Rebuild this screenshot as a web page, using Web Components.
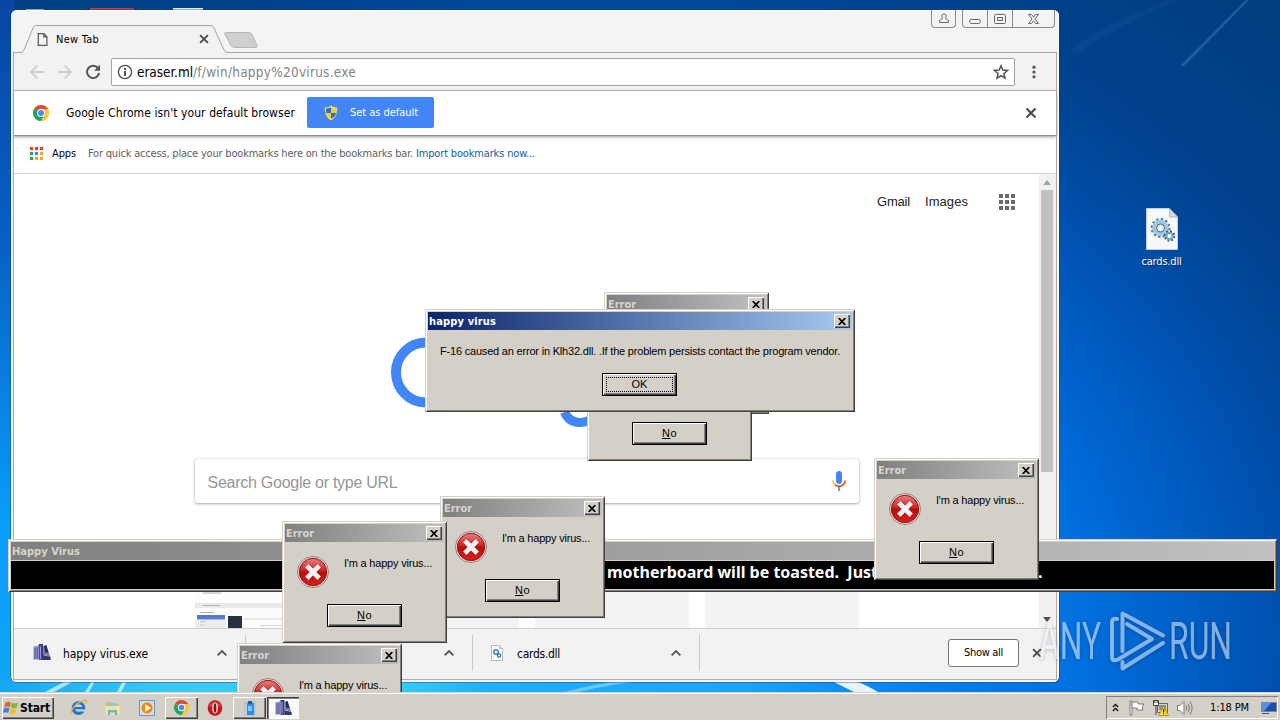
<!DOCTYPE html>
<html lang="en">
<head>
<meta charset="utf-8">
<title>Desktop</title>
<style>
  html, body {
    margin: 0;
    width: 1280px;
    height: 720px;
    overflow: hidden;
    font: 11px/14px "DejaVu Sans Condensed", "DejaVu Sans", sans-serif;
    color: #000;
  }
</style>
</head>
<body>
<desk-top></desk-top>

<script>
const define = (name, ctor) => window.customElements.define(name, ctor);

// One line of text, spaced out or in to take exactly `fit` pixels.
class UiLabel extends HTMLElement {
  constructor() {
    super();

    this.attachShadow({ mode: 'open' }).innerHTML = `
      <style>
        :host {
          display: block;
          flex: none;
          white-space: nowrap;
        }
      </style>
      <span><slot></slot></span>
    `;
  }

  connectedCallback() {
    const fit = Number(this.getAttribute('fit'));
    if (!fit) return;

    const span = this.shadowRoot.querySelector('span');
    const natural = span.getBoundingClientRect().width;
    const count = this.textContent.length;

    span.style.letterSpacing = `${(fit - natural) / count}px`;
    this.style.width = `${fit}px`;
  }
}

const ICONS = {
  chrome: `<svg viewBox="0 0 16 16">
    <circle cx="8" cy="8" r="8" fill="#fbc116"/>
    <path d="M8 8 1.1 4A8 8 0 0 1 14.9 4Z" fill="#dd4b3e"/>
    <path d="M1.1 4A8 8 0 0 0 8 16L11.4 10 8 8Z" fill="#1da462"/>
    <path d="M8 4.2h7A8 8 0 0 1 8 16l3.4-6Z" fill="#fcc934"/>
    <circle cx="8" cy="8" r="3.9" fill="#fff"/><circle cx="8" cy="8" r="3" fill="#4a8af4"/></svg>`,
  page: `<svg viewBox="0 0 16 16" fill="none" stroke="#5a5a5a" stroke-width="1.3"><path d="M3.5 1.7h6l3.2 3.4v9.2H3.5zM9.3 1.7v3.6h3.4"/></svg>`,
  close: `<svg viewBox="0 0 16 16" stroke="#4a4a4a" stroke-width="2.1"><path d="m3.5 3.5 9 9m0-9-9 9"/></svg>`,
  back: `<svg viewBox="0 0 16 16" fill="none" stroke="#cdcdcd" stroke-width="1.8"><path d="M15 8H2m6.3-6.3L2 8l6.3 6.3"/></svg>`,
  forward: `<svg viewBox="0 0 16 16" fill="none" stroke="#cdcdcd" stroke-width="1.8"><path d="M1 8h13M7.7 1.7 14 8l-6.3 6.3"/></svg>`,
  reload: `<svg viewBox="0 0 16 16" fill="none" stroke="#555" stroke-width="2"><path d="M13 4.2A6.1 6.1 0 1 0 14.1 9"/><path d="M15 .8v6H9z" fill="#555" stroke="none"/></svg>`,
  info: `<svg viewBox="0 0 16 16"><circle cx="8" cy="8" r="6.6" fill="none" stroke="#505050" stroke-width="1.4"/><path d="M7 7h2v5H7zM7 4h2v2H7z" fill="#505050"/></svg>`,
  star: `<svg viewBox="0 0 16 16" fill="none" stroke="#555" stroke-width="1.5"><path d="m8 1.8 1.8 4.3 4.7.4-3.6 3 1.1 4.7L8 11.7l-4 2.5 1.1-4.7-3.6-3 4.7-.4z"/></svg>`,
  dots: `<svg viewBox="0 0 16 16" fill="#555"><circle cx="8" cy="3.2" r="1.6"/><circle cx="8" cy="8" r="1.6"/><circle cx="8" cy="12.8" r="1.6"/></svg>`,
  apps: `<svg viewBox="0 0 14 14"><path d="M0 0h3.4v3.4H0zM5.3 0h3.4v3.4H5.3zM10.6 0H14v3.4h-3.4z" fill="#d8483a"/><path d="M0 5.3h3.4v3.4H0z" fill="#2a9d5c"/><path d="M5.3 5.3h3.4v3.4H5.3z" fill="#4285f4"/><path d="M10.6 5.3H14v3.4h-3.4z" fill="#f5a623"/><path d="M0 10.6h3.4V14H0z" fill="#2a9d5c"/><path d="M5.3 10.6h3.4V14H5.3zM10.6 10.6H14V14h-3.4z" fill="#f0a81e"/></svg>`,
  grid: `<svg viewBox="0 0 16 16" fill="#6b6b6b"><path d="M0 0h4v4H0zM6 0h4v4H6zM12 0h4v4h-4zM0 6h4v4H0zM6 6h4v4H6zM12 6h4v4h-4zM0 12h4v4H0zM6 12h4v4H6zM12 12h4v4h-4z"/></svg>`,
  shield: `<svg viewBox="0 0 14 16"><path d="M7 .5C5 2 3 2.200.8 2.200.5 8 2 13 7 15.500 12 13 13.500 8 13.200 2.200 11 2.200 9 2 7 .5Z" fill="#fff6c0" stroke="#8a8a6a" stroke-width=".8"/><path d="M7 2C5.500 3 4 3.400 2 3.400V8h5z" fill="#2f6fc8"/><path d="M7 2c1.500 1 3 1.400 5 1.400V8H7z" fill="#f7cf1d"/><path d="M2 8h5v6C4 12.500 2.500 10.500 2 8Z" fill="#f7cf1d"/><path d="M12 8H7v6c3-1.500 4.500-3.500 5-6Z" fill="#2f6fc8"/></svg>`,
  mic: `<svg viewBox="0 0 14 20"><rect x="4" width="6" height="13" rx="3" fill="#4285f4"/><path d="M.9 9.500A6.100 6.100 0 0 0 3 13.800" fill="none" stroke="#fbbc05" stroke-width="1.600"/><path d="M3 13.800a6.100 6.100 0 0 0 10.100-4.300" fill="none" stroke="#ea4335" stroke-width="1.600"/><path d="M6.200 16h1.600v4H6.200z" fill="#34a853"/></svg>`,
  chevron: `<svg viewBox="0 0 16 16" fill="none" stroke="#555" stroke-width="2.100"><path d="m3 10.700 5-5 5 5"/></svg>`,
  dll: `<svg viewBox="0 0 32 42"><path d="M.5.500h23l8 8.500v32.500H.5z" fill="#f7f8fa" stroke="#c9cdd2"/><path d="M23.500.500v8.500h8z" fill="#d5dbe3" stroke="#9aa5b0" stroke-width=".7"/>
    <circle cx="14.500" cy="20" r="8.500" fill="none" stroke="#55748e" stroke-width="2.800" stroke-dasharray="2.300 2.150"/>
    <circle cx="14.500" cy="20" r="6.300" fill="none" stroke="#9cc8e4" stroke-width="4"/><circle cx="14.500" cy="20" r="4" fill="#e8f2f8" stroke="#46647c"/>
    <circle cx="23.500" cy="28" r="4.600" fill="none" stroke="#3e5568" stroke-width="2.200" stroke-dasharray="1.800 1.810"/><circle cx="23.500" cy="28" r="3.200" fill="#fff" stroke="#6ea4d0" stroke-width="2.300"/></svg>`,
  dllSmall: `<svg viewBox="0 0 12 16"><path d="M.5.5h8l3 3v12H.5z" fill="#fafbfc" stroke="#b4bac2"/><path d="M8.500.5v3h3" fill="#dde3ea" stroke="#b4bac2"/><circle cx="5" cy="7" r="2.200" fill="#fff" stroke="#4f8cc4" stroke-width="1.800"/><circle cx="8" cy="10.500" r="1.600" fill="#fff" stroke="#3d6ea4" stroke-width="1.300"/></svg>`,
  exe: `<svg viewBox="0 0 16 16"><path d="M0 2h3l2-1v14H0z" fill="#8d90c8"/><path d="M1 4h1v10H1zM3 3h1v11H3z" fill="#5a5d9c"/><path d="M5 0h4v15H5z" fill="#3c3f80"/><path d="M6 2h1v12H6z" fill="#9fa3dc"/><path d="m9 2 3-1 4 12v2H9z" fill="#7377b8"/><path d="m10 2 2-1 2 7h-3z" fill="#27295a"/><path d="M9 10h4v2h3v3H9z" fill="#34376e"/><path d="M10 10h3v1h-3zM1 15h4v-1H1z" fill="#c4c7ee"/></svg>`,
  error: `<svg viewBox="0 0 32 32"><defs><linearGradient id="r" x1="0" y1="0" x2="0" y2="1"><stop offset="0" stop-color="#e88080"/><stop offset=".45" stop-color="#cc2424"/><stop offset=".5" stop-color="#b80d0d"/><stop offset="1" stop-color="#d62222"/></linearGradient></defs>
    <circle cx="16" cy="16" r="15.500" fill="#f2e5e3" stroke="#8e8080"/><circle cx="16" cy="16" r="13.700" fill="url(#r)" stroke="#9c1010"/>
    <path d="m10 10 12 12m0-12L10 22" stroke="#8e1010" stroke-width="6.200" opacity=".4"/><path d="m9.800 9.800 12.400 12.400m0-12.400L9.800 22.200" stroke="#f1f1f1" stroke-width="4.800"/></svg>`,
  flag: `<svg viewBox="0 0 16 16"><path d="M3 2v13H1V1h2z" fill="#fff" stroke="#666" stroke-width=".8"/><path d="M3 2h6v2h6l-2 3 1 3H8V8H3z" fill="#fff" stroke="#707070" stroke-width=".9"/></svg>`,
  network: `<svg viewBox="0 0 16 16"><path d="M4.500 3.500h10v9h-10z" fill="#d8d5bd" stroke="#666"/><path d="M6 5h7v5H6z" fill="#8f8e82"/><path d="M.5.500h5v5h-5zM3 5v10" fill="#f5f5e8" stroke="#444"/><path d="M1.800 0v3m2.400-3v3" stroke="#444"/><path d="m10.500 6.500 5 9h-10z" fill="#ffdf26" stroke="#9c8200" stroke-width=".7"/><path d="M10 9h1.200v3.500H10zm0 4.200h1.200v1H10z" fill="#222"/></svg>`,
  sound: `<svg viewBox="0 0 16 16" fill="none" stroke="#777"><path d="M.5 5.500H3L7 1.500v13l-4-4H.5z" fill="#fff"/><path d="M9 5.500q1.600 2.500 0 5m2-7q3 4.500 0 9m2-11q4.200 6.500 0 13"/></svg>`,
  up: `<svg viewBox="0 0 8 10" fill="none" stroke="#111" stroke-width="1.500"><path d="m1 4.500 3-3 3 3m-6 4.500 3-3 3 3"/></svg>`,
  monitor: `<svg viewBox="0 0 16 14"><path d="M.5 1.500h15v9H.5z" fill="#1d50a8" stroke="#6f86a8"/><path d="M1 2h9L3 10H1z" fill="#5c93e0"/><path d="M1 12.500h7" stroke="#555"/></svg>`,
  windows: `<svg viewBox="0 0 16 16"><path d="M2.500 2.500Q5 .8 8 2.500L6.700 7.300Q4 5.800 1.200 7.200Z" fill="#e8622a"/><path d="M9 2.800q2.800 1.600 6-.2L13.600 7.500q-3 1.500-5.800 0Z" fill="#7cb83a"/><path d="M1 8.300q2.700-1.500 5.500 0L5.200 13Q2.500 11.500-.2 13Z" fill="#3d83d8"/><path d="M7.500 8.600q2.800 1.500 5.800 0L12 13.400q-3 1.600-5.800 0Z" fill="#f5bd28"/></svg>`,
  ie: `<svg viewBox="0 0 16 16"><circle cx="8" cy="8.500" r="5" fill="none" stroke="#2277cf" stroke-width="3"/><path d="M4 7.500h9v2.200H4z" fill="#2277cf"/><path d="M10 9.800h5v2h-5z" fill="#d4d0c8"/><path d="M1.500 14.500C-1 12 6 2 15 1.200c1.300.8-.3 2.800-.8 3.200" fill="none" stroke="#e8b73a" stroke-width="1.300"/></svg>`,
  explorer: `<svg viewBox="0 0 16 16"><path d="M1 2h6l1 2h6v10H1z" fill="#e5c24e"/><path d="M3 3h9v5H3z" fill="#8cc8e0"/><path d="M.5 6h14v8.500H.5z" fill="#f6e49a"/><path d="M3 15v-4q0-1 1-1h7q1 0 1 1v4h-2v-2.500H5V15z" fill="#6bb1dd"/></svg>`,
  media: `<svg viewBox="0 0 16 16"><path d="M.5.500h15v15H.5z" fill="#c5ddf2" stroke="#5d98d0"/><circle cx="8" cy="8" r="6.200" fill="#f08a18" stroke="#fff" stroke-width=".8"/><path d="m6 4.200 6 3.800-6 3.800z" fill="#fff"/></svg>`,
  opera: `<svg viewBox="0 0 16 16"><ellipse cx="8" cy="8" rx="7.300" ry="7.700" fill="#c4161b"/><path d="M2 5q6-7 12 0v2q-6-3-12 0z" fill="#dd6a66" opacity=".6"/><ellipse cx="8" cy="8" rx="2.900" ry="5.500" fill="#f0e4e0"/><ellipse cx="8" cy="8" rx="1.400" ry="4.700" fill="#8a1013"/></svg>`,
  bin: `<svg viewBox="0 0 16 16"><path d="M3 2h10v13H3z" fill="#b8ddf4" stroke="#98a8b8" stroke-width=".6"/><path d="M5 3h7v12H5z" fill="#2b8ae2"/><path d="M6 1h4v3H6z" fill="#2a5896"/><path d="M6 6h4v5H6z" fill="#79c8ff"/></svg>`
};

class UiIcon extends HTMLElement {
  constructor() {
    super();
    this.attachShadow({ mode: 'open' });
  }

  connectedCallback() {
    const size = this.getAttribute('size') || 16;
    const height = this.getAttribute('height') || size;

    this.shadowRoot.innerHTML = `
      <style>
        :host {
          display: block;
          flex: none;
          width: ${size}px;
          height: ${height}px;
        }

        svg {
          display: block;
          width: 100%;
          height: 100%;
        }
      </style>
      ${ICONS[this.getAttribute('name')]}
    `;
  }
}

// Classic raised push button
class ClassicButton extends HTMLElement {
  constructor() {
    super();

    this.attachShadow({ mode: 'open' }).innerHTML = `
      <style>
        :host {
          display: flex;
          flex: none;
          align-items: center;
          justify-content: center;
          box-sizing: border-box;
          width: 75px;
          height: 23px;
          border: 1px solid #000;
          box-shadow: inset 1px 1px #fff, inset -1px -1px #404040, inset -2px -2px #808080;
          background: #d4d0c8;
          font: 11px/13px "Liberation Sans", Arial, sans-serif;
        }

        #face {
          display: flex;
          align-items: center;
          justify-content: center;
          width: 65px;
          height: 13px;
          border: 1px solid transparent;
        }

        :host([focused]) #face {
          border: 1px dotted #000;
        }
      </style>
      <div id="face"><slot></slot></div>
    `;
  }
}

// Bordered window with a title bar; the body goes in the slot
class ClassicWindow extends HTMLElement {
  constructor() {
    super();
    this.attachShadow({ mode: 'open' });
  }

  connectedCallback() {
    this.shadowRoot.innerHTML = `
      <style>
        :host {
          display: flex;
          flex-direction: column;
          box-sizing: border-box;
          padding: 3px;
          background: #d4d0c8;
          box-shadow: inset 1px 1px #d4d0c8, inset -1px -1px #404040, inset 2px 2px #fff, inset -2px -2px #808080;
        }

        header {
          display: flex;
          flex: none;
          align-items: center;
          justify-content: space-between;
          height: 18px;
          padding: 0 2px 0 1px;
          background: linear-gradient(90deg, #808080, #c0c0c0);
          color: #d8d4cc;
          font-weight: bold;
        }

        :host([active]) header {
          background: linear-gradient(90deg, #0a246a, #a6caf0);
          color: #fff;
        }

        header ui-label {
          margin-top: 1px;
        }

        #close {
          display: flex;
          align-items: center;
          justify-content: center;
          width: 16px;
          height: 14px;
          background: #d4d0c8;
          box-shadow: inset 1px 1px #fff, inset -1px -1px #404040, inset -2px -2px #808080;
        }

        :host([bare]) #close {
          display: none;
        }
      </style>
      <header>
        <ui-label fit="${this.getAttribute('fit')}">${this.getAttribute('caption')}</ui-label>
        <div id="close"><svg width="8" height="7" viewBox="0 0 8 7"><path d="m.7 0 6.600 7m0-7L.7 7" stroke="#000" stroke-width="1.700"/></svg></div>
      </header>
      <slot></slot>
    `;
  }
}

class ErrorDialog extends HTMLElement {
  constructor() {
    super();

    this.attachShadow({ mode: 'open' }).innerHTML = `
      <style>
        :host {
          display: block;
        }

        classic-window {
          width: 165px;
          height: 122px;
        }

        #message {
          display: flex;
          gap: 15px;
          padding: 14px 0 0 12px;
          font: 11px/14px "Liberation Sans", Arial, sans-serif;
        }

        classic-button {
          margin: 16px 0 0 42px;
        }
      </style>
      <classic-window caption="Error" fit="28">
        <div id="message">
          <ui-icon name="error" size="32"></ui-icon>
          <ui-label fit="88">I'm a happy virus...</ui-label>
        </div>
        <classic-button><ui-label fit="15"><u>N</u>o</ui-label></classic-button>
      </classic-window>
    `;
  }
}

class BrowserTabs extends HTMLElement {
  constructor() {
    super();

    this.attachShadow({ mode: 'open' }).innerHTML = `
      <style>
        :host {
          display: flex;
          justify-content: space-between;
          position: relative;
          height: 43px;
        }

        #shape {
          position: absolute;
          left: 0;
          top: 0;
        }

        #tab {
          display: flex;
          align-items: center;
          position: relative;
          margin-top: 15px;
          height: 28px;
          padding-left: 21px;
        }

        #tab ui-label {
          margin: 1px 98px 0 6px;
        }

        #controls {
          display: flex;
          gap: 6px;
          height: 18px;
          margin-right: 1px;
        }

        #controls div {
          display: flex;
          box-sizing: border-box;
          border: 1px solid #8b8b8b;
          border-top: 0;
          border-radius: 0 0 4px 4px;
        }
      </style>
      <svg id="shape" width="1042" height="43" fill="none">
        <path d="M0 42.500H7Q9 42 10 40L19 18Q20 15.500 22 15.500H197Q199 15.500 200 18L210 40Q211 42.500 214 42.500H1042V43H0z" fill="#f2f2f2"/>
        <path d="M0 43.500V42.500H7Q9 42 10 40L19 18Q20 15.500 22 15.500H197Q199 15.500 200 18L210 40Q211 42.500 214 42.500H1042" stroke="#a5a5a5"/>
        <path d="M212 22.500h22q3 0 4 2l5 11q1 2-2 2h-20q-3 0-4-2l-6-11q-1-2 1-2z" fill="#cfcfcf" stroke="#b6b6b6"/>
      </svg>
      <div id="tab">
        <ui-icon name="page" size="15"></ui-icon>
        <ui-label fit="43">New Tab</ui-label>
        <ui-icon name="close" size="14"></ui-icon>
      </div>
      <div id="controls">
        <div><svg width="23" height="17" fill="none" stroke="#666"><path d="M7.500 12.500v-2l3-2q-2-4.500 1.500-4.500t1.500 4.500l3 2v2z"/></svg></div>
        <div><svg width="91" height="17" fill="none" stroke="#666">
          <path d="M24.500 0v17M49.500 0v17" stroke="#8b8b8b"/>
          <rect x="6.500" y="9.500" width="11" height="4" rx="2"/>
          <rect x="31.500" y="4.500" width="11" height="9" rx="1"/><rect x="34.500" y="7.500" width="5" height="3"/>
          <path d="M65.500 4.500h3l2 2.500 2-2.500h3l-3.500 4.500 3.500 4.500h-3l-2-2.500-2 2.500h-3l3.500-4.500z"/>
        </svg></div>
      </div>
    `;
  }
}

class BrowserToolbar extends HTMLElement {
  constructor() {
    super();

    this.attachShadow({ mode: 'open' }).innerHTML = `
      <style>
        :host {
          display: flex;
          align-items: center;
          box-sizing: border-box;
          height: 38px;
          padding: 0 14px 0 15px;
          gap: 12px;
          border-bottom: 1px solid #b6b6b6;
          background: #f2f2f2;
        }

        #address {
          display: flex;
          flex: 1;
          align-items: center;
          box-sizing: border-box;
          height: 28px;
          margin: 0 -1px 0 -2px;
          padding: 0 5px;
          border: 1px solid #a3a3a3;
          border-radius: 2px;
          background: #fff;
          font-size: 13.5px;
        }

        #address ui-label:nth-of-type(1) {
          margin-left: 4px;
        }

        #address ui-icon:last-child {
          margin-left: auto;
        }

        .path {
          color: #848484;
        }
      </style>
      <ui-icon name="back"></ui-icon>
      <ui-icon name="forward"></ui-icon>
      <ui-icon name="reload"></ui-icon>
      <div id="address">
        <ui-icon name="info"></ui-icon>
        <ui-label fit="56">eraser.ml</ui-label>
        <ui-label class="path" fit="163">/f/win/happy%20virus.exe</ui-label>
        <ui-icon name="star"></ui-icon>
      </div>
      <ui-icon name="dots"></ui-icon>
    `;
  }
}

class BrowserInfobar extends HTMLElement {
  constructor() {
    super();

    this.attachShadow({ mode: 'open' }).innerHTML = `
      <style>
        :host {
          display: flex;
          align-items: center;
          position: relative;
          box-sizing: border-box;
          height: 45px;
          padding: 0 17px 0 19px;
          border-bottom: 1px solid #8f8f8f;
          box-shadow: 0 1px 3px #999;
          background: #fff;
          font-size: 12px;
        }

        #text {
          margin: 0 12px 0 17px;
        }

        #set {
          display: flex;
          align-items: center;
          gap: 12px;
          box-sizing: border-box;
          width: 127px;
          height: 31px;
          margin-top: -1px;
          padding-left: 17px;
          border-radius: 2px;
          background: #4285f4;
          color: #fff;
          font-size: 11px;
        }

        ui-icon:last-child {
          margin-left: auto;
        }
      </style>
      <ui-icon name="chrome"></ui-icon>
      <ui-label id="text" fit="229">Google Chrome isn't your default browser</ui-label>
      <div id="set">
        <ui-icon name="shield" size="14" height="16"></ui-icon>
        <ui-label fit="68">Set as default</ui-label>
      </div>
      <ui-icon name="close" size="16"></ui-icon>
    `;
  }
}

class BookmarksBar extends HTMLElement {
  constructor() {
    super();

    this.attachShadow({ mode: 'open' }).innerHTML = `
      <style>
        :host {
          display: flex;
          align-items: center;
          box-sizing: border-box;
          height: 38px;
          padding: 0 0 2px 16px;
          border-bottom: 1px solid #d6d6d6;
          background: #fff;
        }

        #apps {
          margin: 0 12px 0 9px;
        }

        #hint {
          color: #5e5e5e;
        }

        #import {
          color: #155b9f;
          margin-left: 3px;
        }
      </style>
      <ui-icon name="apps" size="13"></ui-icon>
      <ui-label id="apps" fit="24">Apps</ui-label>
      <ui-label id="hint" fit="325">For quick access, place your bookmarks here on the bookmarks bar.</ui-label>
      <ui-label id="import" fit="119">Import bookmarks now...</ui-label>
    `;
  }
}

class NewTabPage extends HTMLElement {
  constructor() {
    super();

    this.attachShadow({ mode: 'open' }).innerHTML = `
      <style>
        :host {
          display: flex;
          flex: 1;
          min-height: 0;
          background: #fff;
        }

        main {
          display: flex;
          flex-direction: column;
          align-items: center;
          width: 1025px;
        }

        nav {
          display: flex;
          align-items: center;
          align-self: flex-end;
          gap: 15px;
          height: 56px;
          margin-right: 24px;
          color: #222;
          font: 13px/16px "Liberation Sans", Arial, sans-serif;
        }

        nav ui-icon {
          margin-left: 16px;
        }

        #logo {
          width: 272px;
          height: 100px;
          margin-top: 104px;
        }

        #search {
          display: flex;
          align-items: center;
          justify-content: space-between;
          box-sizing: border-box;
          width: 664px;
          height: 44px;
          margin: 25px 0 89px;
          padding: 0 13px;
          border-radius: 2px;
          box-shadow: 0 1px 3px #aaa, 0 0 1px #aaa;
          color: #969696;
          font: 16px/20px "Liberation Sans", Arial, sans-serif;
        }

        #search ui-label {
          margin-top: 3px;
        }

        #tiles {
          display: grid;
          grid-template-columns: repeat(4, 154px);
          gap: 16px;
          flex: 1;
          min-height: 0;
        }

        #tiles div {
          background: #f3f3f3;
          overflow: hidden;
        }

        #tiles svg {
          display: block;
        }

        #scroll {
          display: flex;
          flex-direction: column;
          align-items: center;
          flex: 1;
          padding: 6px 1px 6px 0;
          background: #f1f1f1;
        }

        #thumb {
          width: 12px;
          height: 282px;
          margin: 5px 0 auto;
          background: #c1c1c1;
        }
      </style>
      <main>
        <nav>
          <ui-label fit="33">Gmail</ui-label>
          <ui-label fit="43">Images</ui-label>
          <ui-icon name="grid"></ui-icon>
        </nav>
        <svg id="logo" viewBox="391 334 272 100" fill="none" stroke="#4285f4">
          <circle cx="426" cy="372.500" r="30" stroke-width="10"/>
          <path d="M564.500 412q4 10 15 10.500t17-9" stroke-width="9"/>
        </svg>
        <div id="search">
          <ui-label fit="190">Search Google or type URL</ui-label>
          <ui-icon name="mic" size="14" height="20"></ui-icon>
        </div>
        <div id="tiles">
          <div>
            <svg width="154" height="36">
              <path d="M0 0h154v36H0z" fill="#fcfcfc"/><path d="M0 11h154v5H0z" fill="#e9e9ec"/>
              <path d="M8 1h18M8 13.500h17M5 20.500h14M5 29.500h6M5 33h4" stroke="#b2b2b8"/>
              <path d="M2 23h28v4.500H2z" fill="#5b78d0"/><path d="M33 24h14v12H33z" fill="#26303f"/>
              <path d="M0 28h31v8H0z" fill="#ddd" opacity=".5"/><path d="M48 27h106M65 33.500h22" stroke="#d4d4d4"/>
            </svg>
          </div>
          <div></div>
          <div></div>
          <div></div>
        </div>
      </main>
      <div id="scroll">
        <svg width="8" height="5"><path d="m4 0 4 5H0z" fill="#a3a3a3"/></svg>
        <div id="thumb"></div>
        <svg width="8" height="5"><path d="M0 0h8L4 5z" fill="#505050"/></svg>
      </div>
    `;
  }
}

class DownloadShelf extends HTMLElement {
  constructor() {
    super();

    this.attachShadow({ mode: 'open' }).innerHTML = `
      <style>
        :host {
          display: flex;
          align-items: center;
          box-sizing: border-box;
          height: 51px;
          padding: 0 12px 3px 0;
          border-top: 1px solid #cfcfcf;
          background: #f2f2f2;
          font-size: 12px;
        }

        .item {
          display: flex;
          flex: none;
          align-items: center;
          box-sizing: border-box;
          width: 227px;
          height: 36px;
          padding: 0 16px 0 18px;
          border-right: 1px solid #c9c9c9;
        }

        .item.first {
          width: 232px;
          padding-left: 19px;
        }

        .item ui-label {
          margin: 3px auto 0 14px;
        }

        .item.first ui-label {
          margin-left: 12px;
        }

        #all {
          display: flex;
          align-items: center;
          justify-content: center;
          box-sizing: border-box;
          width: 71px;
          height: 28px;
          margin: 0 11px 0 auto;
          border: 1px solid #757575;
          border-radius: 3px;
          background: #fff;
          font-size: 11px;
        }
      </style>
      <div class="item first">
        <ui-icon name="exe" size="18" height="17"></ui-icon>
        <ui-label fit="85">happy virus.exe</ui-label>
        <ui-icon name="chevron" size="14"></ui-icon>
      </div>
      <div class="item">
        <ui-label></ui-label>
        <ui-icon name="chevron" size="14"></ui-icon>
      </div>
      <div class="item">
        <ui-icon name="dllSmall" size="12" height="16"></ui-icon>
        <ui-label fit="43">cards.dll</ui-label>
        <ui-icon name="chevron" size="14"></ui-icon>
      </div>
      <div id="all"><ui-label fit="39">Show all</ui-label></div>
      <ui-icon name="close" size="14"></ui-icon>
    `;
  }
}

class BrowserWindow extends HTMLElement {
  constructor() {
    super();

    this.attachShadow({ mode: 'open' }).innerHTML = `
      <style>
        :host {
          display: flex;
          flex-direction: column;
          box-sizing: border-box;
          width: 1048px;
          height: 672px;
          padding: 0 3px 3px;
          border-radius: 6px;
          background: #f4f4f4;
          box-shadow: 0 0 0 1px #003c7a66, inset 0 1px #fff, inset 0 -1px #fff, inset -1px 0 #fff;
        }

        #client {
          display: flex;
          flex: 1;
          flex-direction: column;
          min-height: 0;
          outline: 1px solid #b8aaa2;
        }
      </style>
      <browser-tabs></browser-tabs>
      <div id="client">
        <browser-toolbar></browser-toolbar>
        <browser-infobar></browser-infobar>
        <bookmarks-bar></bookmarks-bar>
        <new-tab-page></new-tab-page>
        <download-shelf></download-shelf>
      </div>
    `;
  }
}

class TaskBar extends HTMLElement {
  constructor() {
    super();

    this.attachShadow({ mode: 'open' }).innerHTML = `
      <style>
        :host {
          display: flex;
          align-items: center;
          box-sizing: border-box;
          width: 1280px;
          height: 28px;
          padding: 3px 2px 0;
          background: #d4d0c8;
          box-shadow: inset 0 1px #d4d0c8, inset 0 2px #fff;
        }

        #start, .app {
          display: flex;
          align-items: center;
          justify-content: center;
          box-sizing: border-box;
          height: 22px;
        }

        #start, .open {
          box-shadow: inset 1px 1px #fff, inset -1px -1px #404040, inset -2px -2px #808080;
        }

        #start {
          width: 52px;
          gap: 1px;
          padding-right: 3px;
          margin-right: 9px;
          font-weight: bold;
          font-size: 12px;
        }

        .app {
          width: 33px;
          margin-right: 1px;
        }

        .app:not(.open):not(.pressed) {
          padding-right: 2px;
        }

        .pressed {
          width: 32px;
          background: #fbfafa;
          box-shadow: inset 1px 1px #404040, inset 2px 2px #808080, inset -1px -1px #fff;
        }

        #tray {
          display: flex;
          align-items: center;
          box-sizing: border-box;
          width: 172px;
          height: 23px;
          margin-left: auto;
          padding: 0 1px 0 6px;
          box-shadow: inset 1px 1px #808080, inset -1px -1px #fff;
        }

        #tray ui-label {
          margin: 0 auto 0 17px;
        }

        #tray ui-icon {
          margin-right: 8px;
        }

        #tray ui-icon:first-child {
          margin-right: 10px;
        }

        #tray ui-icon:last-child, #tray ui-icon:nth-child(4) {
          margin-right: 0;
        }
      </style>
      <div id="start"><ui-icon name="windows" size="16"></ui-icon><ui-label fit="30">Start</ui-label></div>
      <div class="app"><ui-icon name="ie" size="17"></ui-icon></div>
      <div class="app"><ui-icon name="explorer"></ui-icon></div>
      <div class="app"><ui-icon name="media"></ui-icon></div>
      <div class="app open"><ui-icon name="chrome" size="15"></ui-icon></div>
      <div class="app"><ui-icon name="opera"></ui-icon></div>
      <div class="app open"><ui-icon name="bin"></ui-icon></div>
      <div class="app pressed"><ui-icon name="exe" size="17" height="16"></ui-icon></div>
      <div id="tray">
        <ui-icon name="up" size="7" height="9"></ui-icon>
        <ui-icon name="flag"></ui-icon>
        <ui-icon name="network"></ui-icon>
        <ui-icon name="sound"></ui-icon>
        <ui-label fit="39">1:18 PM</ui-label>
        <ui-icon name="monitor" size="16" height="14"></ui-icon>
      </div>
    `;
  }
}

class DeskTop extends HTMLElement {
  constructor() {
    super();

    this.attachShadow({ mode: 'open' }).innerHTML = `
      <style>
        :host {
          display: block;
          position: relative;
          width: 1280px;
          height: 720px;
          overflow: hidden;
          background: radial-gradient(900px 760px at 600px 640px, #18a8ff 0, #0a86f0 40%, #006cda 56%, #0052b2 74%, #00428e 90%, #003e80 110%);
        }

        /* windows and icons lie freely on the desktop */
        browser-window, classic-window, error-dialog, #file, #wallpaper, #watermark {
          position: absolute;
        }

        #wallpaper {
          left: 0;
          top: 0;
        }

        #file {
          display: flex;
          flex-direction: column;
          align-items: center;
          gap: 5px;
          left: 1125px;
          top: 208px;
          width: 73px;
          color: #fff;
          text-shadow: 1px 1px 1px #002a5c;
        }

        #marquee {
          display: flex;
          justify-content: flex-end;
          box-sizing: border-box;
          height: 28px;
          padding: 1px 399px 0 0;
          margin-top: 1px;
          background: #000;
          color: #fff;
          font: bold 16px/20px "Noto Sans", "Open Sans", sans-serif;
        }

        #marquee ui-label:last-child {
          margin: 0 -168px 0 160px;
        }

        #report {
          display: flex;
          flex-direction: column;
          align-items: center;
          gap: 15px;
          padding-top: 14px;
          font: 11px/14px "Liberation Sans", Arial, sans-serif;
        }

        #report classic-button {
          margin-right: 1px;
        }

        #watermark {
          left: 1036px;
          top: 606px;
          opacity: .55;
          filter: drop-shadow(0 1px 2px #0006);
        }

        task-bar {
          position: absolute;
          left: 0;
          bottom: 0;
        }
      </style>
      <svg id="wallpaper" width="1280" height="692">
        <defs>
          <linearGradient id="side" x1="0" y1="0" x2="0" y2="1">
            <stop offset="0" stop-color="#0846a4"/><stop offset=".35" stop-color="#0860c4"/>
            <stop offset=".75" stop-color="#0a9cfa"/><stop offset="1" stop-color="#12a4f4"/>
          </linearGradient>
          <linearGradient id="floor">
            <stop offset="0" stop-color="#18a6f0"/><stop offset=".15" stop-color="#38c8f2"/>
            <stop offset=".36" stop-color="#3cd0f4"/><stop offset=".46" stop-color="#20b0fa"/>
            <stop offset=".7" stop-color="#1ca4fa"/><stop offset=".87" stop-color="#0680ee"/>
            <stop offset="1" stop-color="#0072e0"/>
          </linearGradient>
        </defs>
        <path d="M0 0h14v692H0z" fill="url(#side)"/>
        <path d="M0 680h1058v12H0z" fill="url(#floor)"/>
        <path d="M45 692 66 681h8L54 692zM85 692l7-11h3l-6 11zM117 692l6-11h4l-6 11z" fill="#d8f8ff" opacity=".75"/>
        <path d="M564 692q30-8 58-11h22q-35 3-65 11z" fill="#b4e8ff" opacity=".5"/>
        <path d="m832 681 24 0q14 6 22 11h-24z" fill="#fff" opacity=".9"/>
        <path d="M1070 50q30-25 100-50h8Q1110 30 1075 55z" fill="#5b9de0" opacity=".07"/>
        <path d="M1180 66 1246 0h3L1184 66z" fill="#8cc0ee" opacity=".25"/>
        <path d="M90 8h44v3H90z" fill="#d8382c"/><path d="M173 8h30v3h-30zM26 9h18v2H26z" fill="#eee"/>
      </svg>

      <div id="file">
        <ui-icon name="dll" size="32" height="42"></ui-icon>
        <ui-label fit="40">cards.dll</ui-label>
      </div>

      <browser-window style="left:11px;top:10px"></browser-window>

      <classic-window bare caption="Happy Virus" fit="68" style="left:8px;top:539px;width:1269px;height:53px">
        <div id="marquee">
          <ui-label fit="271">motherboard will be toasted.&nbsp; Just</ui-label>
          <ui-label fit="5">.</ui-label>
        </div>
      </classic-window>

      <error-dialog style="left:604px;top:292px"></error-dialog>
      <error-dialog style="left:587px;top:339px"></error-dialog>
      <error-dialog style="left:874px;top:458px"></error-dialog>
      <error-dialog style="left:440px;top:496px"></error-dialog>
      <error-dialog style="left:237px;top:643px"></error-dialog>
      <error-dialog style="left:282px;top:521px"></error-dialog>

      <classic-window active caption="happy virus" fit="67" style="left:425px;top:309px;width:430px;height:103px">
        <div id="report">
          <ui-label fit="400">F-16 caused an error in Klh32.dll. .If the problem persists contact the program vendor.</ui-label>
          <classic-button focused><ui-label fit="16">OK</ui-label></classic-button>
        </div>
      </classic-window>

      <svg id="watermark" width="200" height="70" viewBox="1036 606 200 70" font-family="Roboto, sans-serif" font-size="52" fill="#eef4fc">
        <text x="1039" y="659" textLength="62" lengthAdjust="spacingAndGlyphs">ANY</text>
        <text x="1169" y="659" textLength="63" lengthAdjust="spacingAndGlyphs">RUN</text>
        <path d="M1122.500 651V613.500L1163 635.500M1127 624 1152 639 1118 659.500Q1112 662 1112 657V622Q1112 618 1117 619M1122.500 662V668.500L1163 643" fill="none" stroke="#eef4fc" stroke-width="4" stroke-linejoin="round" stroke-linecap="round"/>
      </svg>

      <task-bar></task-bar>
    `;
  }
}

define('ui-label', UiLabel);
define('ui-icon', UiIcon);
define('classic-button', ClassicButton);
define('classic-window', ClassicWindow);
define('error-dialog', ErrorDialog);
define('browser-tabs', BrowserTabs);
define('browser-toolbar', BrowserToolbar);
define('browser-infobar', BrowserInfobar);
define('bookmarks-bar', BookmarksBar);
define('new-tab-page', NewTabPage);
define('download-shelf', DownloadShelf);
define('browser-window', BrowserWindow);
define('task-bar', TaskBar);
define('desk-top', DeskTop);
</script>
</body>
</html>
